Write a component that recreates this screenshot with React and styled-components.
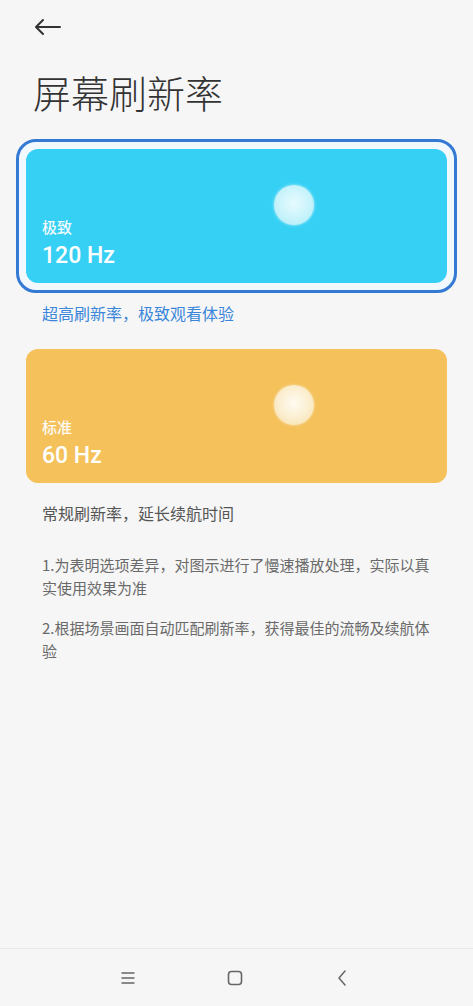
import styled, { createGlobalStyle } from "styled-components"

const GlobalStyle = createGlobalStyle`
    html, body {
        margin: 0;
        padding: 0;
        background: #f6f6f6;
    }
    * {
        box-sizing: border-box;
    }
`
const Page = styled.div`
    display: flex;
    flex-direction: column;
    min-height: 1006px;
    background: #f6f6f6;
    font-family: "Noto Sans CJK SC", "Noto Sans", sans-serif;
`
const Header = styled.div`
    display: flex;
    align-items: center;
    height: 54px;
    padding: 0 0 0 33px;
`
const BackButton = styled.button`
    display: flex;
    align-items: center;
    justify-content: center;
    width: 30px;
    height: 30px;
    padding: 0;
    background: none;
    border: none;
    cursor: pointer;
`
const Title = styled.h1`
    margin: 13px 0 0 33px;
    font-size: 38px;
    line-height: 50px;
    font-weight: 300;
    color: #333;
`
const Options = styled.div`
    display: flex;
    flex-direction: column;
    padding: 22px 16px 0 16px;
`
const Frame = styled.div`
    padding: 7px;
    border-radius: 20px;
    border: 3px solid ${props => props.selected ? "#3479d3" : "transparent"};
    background: ${props => props.selected ? "#f2f9fe" : "transparent"};
`
const Card = styled.div`
    position: relative;
    display: flex;
    flex-direction: column;
    justify-content: flex-end;
    height: 134px;
    padding: 0 16px 13px 16px;
    border-radius: 12px;
    background: ${props => props.color};
    color: #fff;
`
const Ball = styled.div`
    position: absolute;
    left: 248px;
    top: 36px;
    width: 40px;
    height: 40px;
    border-radius: 50%;
    background: ${props => props.glow};
    box-shadow: 0 0 3px ${props => props.edge};
`
const ModeName = styled.div`
    font-size: 15px;
    line-height: 20px;
    font-weight: 500;
    opacity: 0.92;
`
const ModeRate = styled.div`
    margin-top: 5px;
    font-family: "Roboto", "Noto Sans", sans-serif;
    font-size: 23px;
    line-height: 28px;
    font-weight: 500;
`
const Hint = styled.p`
    margin: 9px 0 15px 26px;
    font-size: 16px;
    line-height: 22px;
    color: ${props => props.active ? "#3a86da" : "#555"};
`
const Notes = styled.div`
    display: flex;
    flex-direction: column;
    gap: 17px;
    padding: 14px 0 0 42px;
    width: 440px;
`
const Note = styled.p`
    margin: 0;
    font-size: 15px;
    line-height: 23px;
    color: #6a6a6a;
`
const Spacer = styled.div`
    flex: 1;
`
const NavBar = styled.div`
    display: flex;
    justify-content: center;
    align-items: center;
    gap: 87px;
    height: 58px;
    padding-right: 3px;
    border-top: 1px solid #e9e9e9;
`
const NavIcon = styled.div`
    display: flex;
    width: 20px;
    height: 20px;
    align-items: center;
    justify-content: center;
`

const modes = [
    {
        name: "极致",
        rate: "120 Hz",
        hint: "超高刷新率，极致观看体验",
        color: "#37d0f5",
        glow: "radial-gradient(circle at 50% 45%, #e6fbff 0%, #c8f3fb 55%, #a8eaf6 100%)",
        edge: "#bdf2fb",
        selected: true,
    },
    {
        name: "标准",
        rate: "60 Hz",
        hint: "常规刷新率，延长续航时间",
        color: "#f4c15b",
        glow: "radial-gradient(circle at 50% 45%, #fffbf1 0%, #fbefd2 50%, #f7dc9f 100%)",
        edge: "#fae3ad",
        selected: false,
    },
]

function App() {
    return (
        <>
            <GlobalStyle />
            <Page>
                <Header>
                    <BackButton>
                        <svg width="28" height="18" viewBox="0 0 28 18" fill="none" stroke="#333" strokeWidth="2" strokeLinecap="round" strokeLinejoin="round">
                            <path d="M26 9H3M9 2L2 9l7 7" />
                        </svg>
                    </BackButton>
                </Header>
                <Title>屏幕刷新率</Title>
                <Options>
                    {modes.map(mode => (
                        <div key={mode.rate}>
                            <Frame selected={mode.selected}>
                                <Card color={mode.color}>
                                    <Ball glow={mode.glow} edge={mode.edge} />
                                    <ModeName>{mode.name}</ModeName>
                                    <ModeRate>{mode.rate}</ModeRate>
                                </Card>
                            </Frame>
                            <Hint active={mode.selected}>{mode.hint}</Hint>
                        </div>
                    ))}
                </Options>
                <Notes>
                    <Note>1.为表明选项差异，对图示进行了慢速播放处理，实际以真实使用效果为准</Note>
                    <Note>2.根据场景画面自动匹配刷新率，获得最佳的流畅及续航体验</Note>
                </Notes>
                <Spacer />
                <NavBar>
                    <NavIcon>
                        <svg width="16" height="14" viewBox="0 0 16 14" fill="none" stroke="#666" strokeWidth="1.4" strokeLinecap="round">
                            <path d="M2 2h12M2 7h12M2 12h12" />
                        </svg>
                    </NavIcon>
                    <NavIcon>
                        <svg width="16" height="16" viewBox="0 0 16 16" fill="none" stroke="#666" strokeWidth="1.6">
                            <rect x="1.5" y="1.5" width="13" height="13" rx="3" />
                        </svg>
                    </NavIcon>
                    <NavIcon>
                        <svg width="10" height="16" viewBox="0 0 10 16" fill="none" stroke="#666" strokeWidth="1.5" strokeLinecap="round" strokeLinejoin="round">
                            <path d="M8 1L2 8l6 7" />
                        </svg>
                    </NavIcon>
                </NavBar>
            </Page>
        </>
    )
}

export default App
